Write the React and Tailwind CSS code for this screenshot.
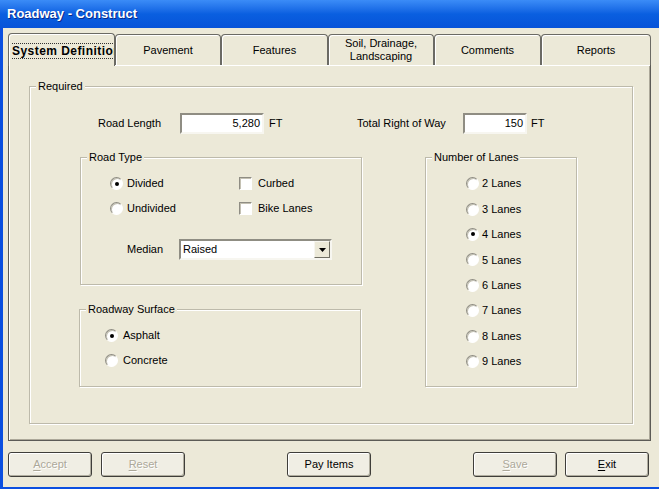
import React from 'react';

function Radio({ checked, label, gap = 'ml-[4px]' }) {
  return (
    <div className="flex items-center h-full">
      <span className="w-[13px] h-[13px] shrink-0 rounded-full border border-t-[#8f8d83] border-l-[#8f8d83] border-r-white border-b-white bg-white shadow-[inset_1px_1px_0_#c4c1b3] flex items-center justify-center">
        {checked && <span className="w-[4px] h-[4px] rounded-full bg-black" />}
      </span>
      <span className={gap}>{label}</span>
    </div>
  );
}

function Check({ label }) {
  return (
    <div className="flex items-center h-full">
      <span className="w-[13px] h-[13px] shrink-0 border border-t-[#8f8d83] border-l-[#8f8d83] border-r-white border-b-white bg-white shadow-[inset_1px_1px_0_#c4c1b3]" />
      <span className="ml-[6px]">{label}</span>
    </div>
  );
}

function Group({ label, className, children }) {
  return (
    <div className={`relative border border-[#bdbaab] shadow-[inset_1px_1px_0_#fff,1px_1px_0_#fff] ${className}`}>
      <span className="absolute -top-[8px] left-[6px] px-[2px] bg-[#ece9d8] leading-[14px]">{label}</span>
      {children}
    </div>
  );
}

function TextBox({ value, width }) {
  return (
    <div className={`h-[21px] ${width} border-2 border-t-[#8f8d83] border-l-[#8f8d83] border-r-[#f7f6f0] border-b-[#f7f6f0] bg-white flex items-center justify-end pr-[2px]`}>
      {value}
    </div>
  );
}

function Tab({ label, width, twoLine }) {
  return (
    <div className={`${width} h-[31px] rounded-t-[4px] border border-b-0 border-[#6b6a64] bg-[#ece9d8] shadow-[inset_1px_1px_0_#fff] flex items-center justify-center text-center ${twoLine ? 'leading-[13px]' : ''}`}>
      {label}
    </div>
  );
}

function Button({ label, underline, disabled, className }) {
  const first = label.slice(0, 1);
  const rest = label.slice(1);
  return (
    <div className={`w-[84px] h-[25px] rounded-[3px] border border-[#3f3e3a] bg-[#f0eee4] shadow-[inset_1px_1px_0_#fff,inset_-1px_-1px_0_#b0ad9f] flex items-center justify-center ${disabled ? 'text-[#aca899] [text-shadow:1px_1px_0_#fff]' : 'text-black'} ${className}`}>
      {underline ? (
        <span>
          <span className="underline underline-offset-2">{first}</span>
          {rest}
        </span>
      ) : (
        label
      )}
    </div>
  );
}

export default function App() {
  return (
    <div className="w-[659px] h-[489px] flex flex-col bg-[#ece9d8] overflow-hidden font-['Liberation_Sans',Arial,sans-serif] text-[11px] text-black">
      {/* title bar */}
      <div className="h-[28px] shrink-0 bg-linear-to-b from-[#3b8cf7] via-[#0a5fe0] to-[#0753d9] flex items-center pl-[7px]">
        <span className="text-white font-bold text-[13px] [text-shadow:1px_1px_0_#0a2a8a]">Roadway - Construct</span>
      </div>

      <div className="flex-1 flex flex-col border-l-[3px] border-b-[2px] border-[#0b4fe0] pt-[4px] pl-[5px]">
        {/* tabs */}
        <div className="flex items-end h-[33px] relative z-10">
          <div className="w-[107px] h-[33px] -mb-px rounded-t-[4px] border border-b-0 border-[#6b6a64] bg-[#ece9d8] shadow-[inset_1px_1px_0_#fff] overflow-hidden flex items-center pl-[3px] pt-[1px]">
            <span className="whitespace-nowrap font-bold text-[12px] tracking-[0.45px] leading-[14px] border-y border-dotted border-[#333]">System Definition</span>
          </div>
          <Tab label="Pavement" width="w-[106px]" />
          <Tab label="Features" width="w-[107px]" />
          <Tab label={<>Soil, Drainage,<br />Landscaping</>} width="w-[106px]" twoLine />
          <Tab label="Comments" width="w-[107px]" />
          <Tab label="Reports" width="w-[110px]" />
        </div>

        {/* tab panel */}
        <div className="w-[643px] h-[377px] -mt-px border border-[#5c5b56] bg-[#ece9d8] shadow-[inset_1px_1px_0_#fff,inset_-1px_-1px_0_#aca899] pt-[21px] pl-[20px]">
          <Group label="Required" className="w-[604px] h-[338px]">
            {/* lengths */}
            <div className="flex items-center h-[21px] mt-[26px]">
              <div className="w-[327px] flex items-center pl-[68px]">
                <span className="w-[82px]">Road Length</span>
                <TextBox value="5,280" width="w-[84px]" />
                <span className="ml-[5px]">FT</span>
              </div>
              <span className="w-[106px]">Total Right of Way</span>
              <TextBox value="150" width="w-[64px]" />
              <span className="ml-[4px]">FT</span>
            </div>

            <div className="flex mt-[23px] pl-[50px]">
              <div className="flex flex-col">
                <Group label="Road Type" className="w-[282px] h-[128px]">
                  <div className="pt-[13px] pl-[29px]">
                    <div className="flex h-[25px]">
                      <div className="w-[129px]"><Radio checked label="Divided" /></div>
                      <Check label="Curbed" />
                    </div>
                    <div className="flex h-[25px]">
                      <div className="w-[129px]"><Radio label="Undivided" /></div>
                      <Check label="Bike Lanes" />
                    </div>
                  </div>
                  <div className="flex items-center h-[21px] mt-[18px] pl-[46px]">
                    <span className="w-[52px]">Median</span>
                    <div className="w-[153px] h-[21px] border-2 border-t-[#8f8d83] border-l-[#8f8d83] border-r-[#f7f6f0] border-b-[#f7f6f0] bg-white flex items-center">
                      <span className="flex-1 pl-[2px]">Raised</span>
                      <span className="w-[16px] h-[17px] bg-[#ece9d8] border border-t-[#f7f6f0] border-l-[#f7f6f0] border-r-[#716f64] border-b-[#716f64] flex items-center justify-center">
                        <svg width="7" height="4" viewBox="0 0 7 4"><path d="M0 0h7L3.5 4z" fill="#000" /></svg>
                      </span>
                    </div>
                  </div>
                </Group>
                <Group label="Roadway Surface" className="w-[282px] h-[78px] mt-[24px] -ml-px">
                  <div className="pt-[13px] pl-[25px]">
                    <div className="h-[25px]"><Radio checked label="Asphalt" gap="ml-[5px]" /></div>
                    <div className="h-[25px]"><Radio label="Concrete" gap="ml-[5px]" /></div>
                  </div>
                </Group>
              </div>

              <Group label="Number of Lanes" className="w-[152px] h-[230px] ml-[63px]">
                <div className="pt-[13px] pl-[40px]">
                  {['2 Lanes', '3 Lanes', '4 Lanes', '5 Lanes', '6 Lanes', '7 Lanes', '8 Lanes', '9 Lanes'].map((l) => (
                    <div key={l} className="h-[25.4px]">
                      <Radio checked={l === '4 Lanes'} label={l} gap="ml-[3px]" />
                    </div>
                  ))}
                </div>
              </Group>
            </div>
          </Group>
        </div>

        {/* buttons */}
        <div className="flex mt-[11px]">
          <Button label="Accept" underline disabled />
          <Button label="Reset" underline disabled className="ml-[9px]" />
          <Button label="Pay Items" className="ml-[102px]" />
          <Button label="Save" underline disabled className="ml-[102px]" />
          <Button label="Exit" underline className="ml-[8px]" />
        </div>
      </div>
    </div>
  );
}
